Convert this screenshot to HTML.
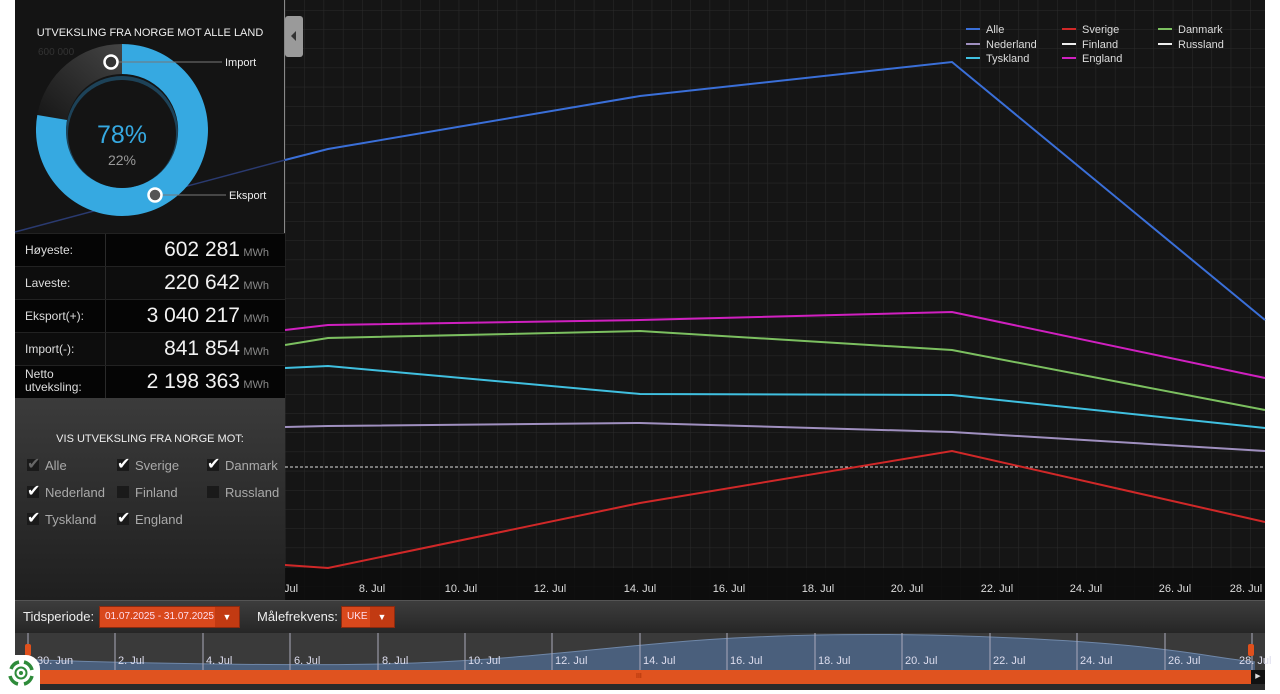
<!DOCTYPE html>
<html><head><meta charset="utf-8"><style>
*{margin:0;padding:0;box-sizing:border-box}
body{width:1280px;height:694px;background:#fff;position:relative;overflow:hidden;font-family:"Liberation Sans","DejaVu Sans",sans-serif;color:#ddd;white-space:nowrap}
.abs{position:absolute}
#left{left:15px;top:0;width:270px;height:600px;background:#141414}
#tbl{left:15px;top:233px;width:270px;height:165px}
.row{position:absolute;left:0;width:270px;height:33px;border-top:1px solid #222}
.row .l{position:absolute;left:10px;top:10px;font-size:12px;color:#ddd;width:80px;line-height:13px}
.row .v{position:absolute;right:45px;top:4px;font-size:21px;color:#f2f2f2}
.row .u{position:absolute;right:16px;top:13px;font-size:11px;color:#888}
.row .sep{position:absolute;left:90px;top:0;width:1px;height:33px;background:#2a2a2a}
#chk{left:15px;top:398px;width:270px;height:202px;background:linear-gradient(#3b3b3b,#1f1f1f)}
.cb{position:absolute;font-size:13px;color:#aaa}
.cb i{display:inline-block;width:12px;height:12px;background:#1a1a1a;vertical-align:-1px;margin-right:6px;position:relative;font-style:normal}
.cb i b{position:absolute;left:0;top:-5px;font-size:16px;color:#fff;font-weight:bold}
#bar{left:15px;top:600px;width:1250px;height:33px;background:linear-gradient(#3d3d3d,#262626);border-top:1px solid #555}
.sel{position:absolute;top:5px;height:22px;background:#d9481c;border:1px solid #8a2a10;font-size:10px;color:#fde;line-height:20px;padding-left:5px;overflow:hidden}
.sel span{position:absolute;right:0;top:0;width:24px;height:20px;background:#c23a12;color:#fff;font-size:9px;text-align:center}
#nav{left:15px;top:633px;width:1250px;height:37px;background:#3a3a3a}
.nl{position:absolute;top:22px;font-size:11px;color:#dde}
</style></head><body>
<div id="left" class="abs"></div>
<div class="abs" style="left:0;top:0;width:1280px;height:600px">
<svg width="1280" height="600" style="position:absolute;left:0;top:0">
<defs>
<pattern id="g" x="285" y="10" width="19.3" height="19.2" patternUnits="userSpaceOnUse">
<path d="M0 0H19.3M0 0V19.2" stroke="#2b2b2b" stroke-width="1" fill="none"/></pattern>
<linearGradient id="gr" x1="0" y1="1" x2="1" y2="0"><stop offset="0" stop-color="#161616"/><stop offset="1" stop-color="#444"/></linearGradient>
</defs>
<rect x="285" y="0" width="980" height="600" fill="#151515"/>
<rect x="285" y="0" width="980" height="600" fill="url(#g)"/>
<rect x="285" y="568" width="980" height="32" fill="#0b0b0b" opacity=".8"/>
<line x1="284.5" y1="0" x2="284.5" y2="600" stroke="#888" stroke-width="1"/>
<line x1="15" y1="232" x2="285" y2="160" stroke="#2a3a70" stroke-width="1.5"/>
<line x1="285" y1="467" x2="1265" y2="467" stroke="#ddd" stroke-width="1" stroke-dasharray="3,2"/>
<g fill="none" stroke-width="2">
<polyline stroke="#3a6fd8" points="285,160 328,149 640,96 952,62 1265,320"/>
<polyline stroke="#d020c0" points="285,330 328,325 640,320 952,312 1265,378"/>
<polyline stroke="#7cc060" points="285,345 328,338 640,331 952,350 1265,410"/>
<polyline stroke="#40c0e0" points="285,368 328,366 640,394 952,395 1265,428"/>
<polyline stroke="#a090c0" points="285,427 328,426 640,423 952,432 1265,451"/>
<polyline stroke="#d02828" points="285,565 328,568 640,503 952,451 1265,522"/>
</g>
<g font-size="11" fill="#ddd" text-anchor="middle">
<text x="291" y="592">Jul</text><text x="372" y="592">8. Jul</text><text x="461" y="592">10. Jul</text><text x="550" y="592">12. Jul</text><text x="640" y="592">14. Jul</text><text x="729" y="592">16. Jul</text><text x="818" y="592">18. Jul</text><text x="907" y="592">20. Jul</text><text x="997" y="592">22. Jul</text><text x="1086" y="592">24. Jul</text><text x="1175" y="592">26. Jul</text><text x="1246" y="592">28. Jul</text>
</g>
<rect x="285" y="16" width="18" height="41" rx="3" fill="#9a9a9a"/>
<path d="M291 36l5-5v10z" fill="#333"/>
<g font-size="11" fill="#ddd">
<line x1="966" y1="29" x2="980" y2="29" stroke="#3a6fd8" stroke-width="2"/><text x="986" y="33">Alle</text>
<line x1="1062" y1="29" x2="1076" y2="29" stroke="#d02828" stroke-width="2"/><text x="1082" y="33">Sverige</text>
<line x1="1158" y1="29" x2="1172" y2="29" stroke="#7cc060" stroke-width="2"/><text x="1178" y="33">Danmark</text>
<line x1="966" y1="44" x2="980" y2="44" stroke="#a090c0" stroke-width="2"/><text x="986" y="48">Nederland</text>
<line x1="1062" y1="44" x2="1076" y2="44" stroke="#eee" stroke-width="2"/><text x="1082" y="48">Finland</text>
<line x1="1158" y1="44" x2="1172" y2="44" stroke="#eee" stroke-width="2"/><text x="1178" y="48">Russland</text>
<line x1="966" y1="58" x2="980" y2="58" stroke="#40c0e0" stroke-width="2"/><text x="986" y="62">Tyskland</text>
<line x1="1062" y1="58" x2="1076" y2="58" stroke="#d020c0" stroke-width="2"/><text x="1082" y="62">England</text>
</g>
<!-- donut -->
<text x="38" y="55" font-size="10" fill="#333">600 000</text>
<path d="M37.3 115 A86 86 0 0 1 122 44 L122 74 A56 56 0 0 0 67 120 Z" fill="url(#gr)"/>
<path d="M122 44 A86 86 0 1 1 37.3 115 L67 120 A56 56 0 1 0 122 74 Z" fill="#36a9e1"/>
<circle cx="122" cy="132" r="56" fill="#1d4258"/>
<circle cx="122" cy="134" r="54" fill="#141414"/>
<text x="150" y="36" font-size="11" fill="#eee" text-anchor="middle">UTVEKSLING FRA NORGE MOT ALLE LAND</text>
<text x="122" y="143" font-size="25" fill="#36a9e1" text-anchor="middle">78%</text>
<text x="122" y="165" font-size="14" fill="#999" text-anchor="middle">22%</text>
<line x1="112" y1="62" x2="222" y2="62" stroke="#777"/>
<circle cx="111" cy="62" r="6.5" fill="#333" stroke="#fff" stroke-width="2.5"/>
<text x="225" y="66" font-size="11" fill="#eee">Import</text>
<line x1="156" y1="195" x2="226" y2="195" stroke="#777"/>
<circle cx="155" cy="195" r="6.5" fill="#555" stroke="#fff" stroke-width="2.5"/>
<text x="229" y="199" font-size="11" fill="#eee">Eksport</text>
</svg>
</div>
<div id="tbl" class="abs">
<div class="row" style="top:0;background:#050505"><div class="sep"></div><div class="l">Høyeste:</div><div class="v">602 281</div><div class="u">MWh</div></div>
<div class="row" style="top:33px;background:#0d0d0d"><div class="sep"></div><div class="l">Laveste:</div><div class="v">220 642</div><div class="u">MWh</div></div>
<div class="row" style="top:66px;background:#050505"><div class="sep"></div><div class="l">Eksport(+):</div><div class="v">3 040 217</div><div class="u">MWh</div></div>
<div class="row" style="top:99px;background:#0d0d0d"><div class="sep"></div><div class="l">Import(-):</div><div class="v">841 854</div><div class="u">MWh</div></div>
<div class="row" style="top:132px;background:#050505"><div class="sep"></div><div class="l" style="top:2px">Netto<br>utveksling:</div><div class="v">2 198 363</div><div class="u">MWh</div></div>
</div>
<div id="chk" class="abs">
<div class="abs" style="left:0;width:270px;top:35px;text-align:center;font-size:11px;color:#eee">VIS UTVEKSLING FRA NORGE MOT:</div>
<div class="cb" style="left:12px;top:60px"><i><b style="color:#666">✔</b></i>Alle</div>
<div class="cb" style="left:102px;top:60px"><i><b>✔</b></i>Sverige</div>
<div class="cb" style="left:192px;top:60px"><i><b>✔</b></i>Danmark</div>
<div class="cb" style="left:12px;top:87px"><i><b>✔</b></i>Nederland</div>
<div class="cb" style="left:102px;top:87px"><i></i>Finland</div>
<div class="cb" style="left:192px;top:87px"><i></i>Russland</div>
<div class="cb" style="left:12px;top:114px"><i><b>✔</b></i>Tyskland</div>
<div class="cb" style="left:102px;top:114px"><i><b>✔</b></i>England</div>
</div>
<div id="bar" class="abs">
<div class="abs" style="left:8px;top:8px;font-size:13px;color:#eee">Tidsperiode:</div>
<div class="sel" style="left:84px;width:141px">01.07.2025 - 31.07.2025<span>▼</span></div>
<div class="abs" style="left:242px;top:8px;font-size:13px;color:#eee">Målefrekvens:</div>
<div class="sel" style="left:326px;width:54px">UKE<span>▼</span></div>
</div>
<div id="nav" class="abs">
<svg width="1250" height="37" style="position:absolute;left:0;top:0">
<path d="M0 26 C100 30,300 34,400 30 S560 18,650 10 S850 -2,1000 5 S1180 22,1240 29 L1240 37 L0 37Z" fill="#4a5f7c"/>
<path d="M0 26 C100 30,300 34,400 30 S560 18,650 10 S850 -2,1000 5 S1180 22,1240 29" fill="none" stroke="#6f87a8"/>
<g stroke="#aab" stroke-width="1">
<line x1="100" y1="0" x2="100" y2="37"/><line x1="188" y1="0" x2="188" y2="37"/><line x1="275" y1="0" x2="275" y2="37"/><line x1="363" y1="0" x2="363" y2="37"/><line x1="450" y1="0" x2="450" y2="37"/><line x1="537" y1="0" x2="537" y2="37"/><line x1="625" y1="0" x2="625" y2="37"/><line x1="712" y1="0" x2="712" y2="37"/><line x1="800" y1="0" x2="800" y2="37"/><line x1="887" y1="0" x2="887" y2="37"/><line x1="975" y1="0" x2="975" y2="37"/><line x1="1062" y1="0" x2="1062" y2="37"/><line x1="1150" y1="0" x2="1150" y2="37"/><line x1="1237" y1="0" x2="1237" y2="37"/><line x1="13" y1="0" x2="13" y2="37"/>
</g>
<rect x="10" y="11" width="6" height="12" rx="2" fill="#e0501c"/>
<rect x="1233" y="11" width="6" height="12" rx="2" fill="#e0501c"/>
</svg>
<div class="nl" style="left:22px">30. Jun</div><div class="nl" style="left:103px">2. Jul</div><div class="nl" style="left:191px">4. Jul</div><div class="nl" style="left:279px">6. Jul</div><div class="nl" style="left:367px">8. Jul</div><div class="nl" style="left:453px">10. Jul</div><div class="nl" style="left:540px">12. Jul</div><div class="nl" style="left:628px">14. Jul</div><div class="nl" style="left:715px">16. Jul</div><div class="nl" style="left:803px">18. Jul</div><div class="nl" style="left:890px">20. Jul</div><div class="nl" style="left:978px">22. Jul</div><div class="nl" style="left:1065px">24. Jul</div><div class="nl" style="left:1153px">26. Jul</div><div class="nl" style="left:1224px">28. Jul</div>
</div>
<div class="abs" style="left:15px;top:670px;width:1250px;height:20px;background:#2a2a2a"></div>
<div class="abs" style="left:15px;top:670px;width:1236px;height:14px;background:#e0531f"></div>
<div class="abs" style="left:636px;top:673px;font-size:7px;color:#a02a00">III</div>
<div class="abs" style="left:1251px;top:670px;width:14px;height:14px;background:#111;color:#ddd;font-size:7px;text-align:center;line-height:14px">▶</div>
<div class="abs" style="left:0;top:655px;width:40px;height:39px;background:#fff;border-top-right-radius:14px"></div>
<svg class="abs" style="left:5px;top:657px" width="32" height="32" viewBox="0 0 32 32">
<g fill="none" stroke="#2e8b3a" stroke-width="3.5">
<path d="M6 12 A11 11 0 0 1 14 5"/><path d="M19 5 A11 11 0 0 1 27 13"/><path d="M27 19 A11 11 0 0 1 19 27"/><path d="M13 27 A11 11 0 0 1 5 19"/>
</g>
<circle cx="16" cy="16" r="5.5" fill="none" stroke="#2e8b3a" stroke-width="2"/>
<circle cx="16" cy="16" r="2" fill="#2e8b3a"/>
</svg>
</body></html>
